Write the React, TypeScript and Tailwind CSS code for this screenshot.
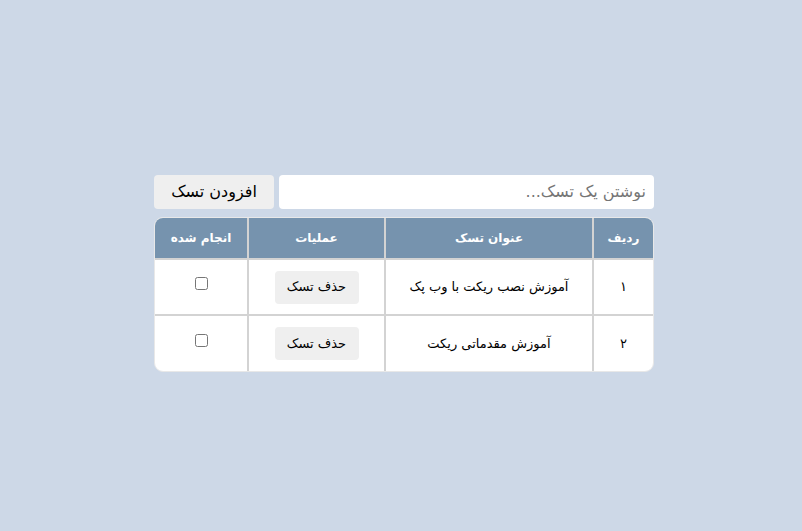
import React from "react";

const tasks = [
  { id: "۱", title: "آموزش نصب ریکت با وب پک" },
  { id: "۲", title: "آموزش مقدماتی ریکت" },
];

const App = () => {
  return (
    <div
      dir="rtl"
      className="min-h-screen w-full bg-[#cdd8e7] flex items-center justify-center pt-[16px] pl-[6px] font-['DejaVu_Sans',sans-serif]"
    >
      <div className="w-[500px] flex flex-col gap-2">
        <div className="flex gap-[5px] h-[34px]">
          <input
            type="text"
            placeholder="نوشتن یک تسک..."
            className="flex-1 bg-white rounded-[4px] px-[8px] text-[16px] text-[#333] placeholder:text-[#757575] outline-none"
          />
          <button className="w-[120px] bg-[#efefef] rounded-[4px] text-[16px] text-black">
            افزودن تسک
          </button>
        </div>

        <div className="rounded-[9px] overflow-hidden border border-[#e8e8e8] bg-white">
          <table className="w-full border-collapse text-[13px] text-black">
            <thead>
              <tr className="bg-[#7693ae] text-white h-[41px]">
                <th className="w-[60px] border-l-2 border-[#d3d3d3] text-[12px] font-bold">ردیف</th>
                <th className="w-[208px] border-l-2 border-[#d3d3d3] text-[12px] font-bold">عنوان تسک</th>
                <th className="w-[137px] border-l-2 border-[#d3d3d3] text-[12px] font-bold">عملیات</th>
                <th className="text-[12px] font-bold">انجام شده</th>
              </tr>
            </thead>
            <tbody>
              {tasks.map((t) => (
                <tr key={t.id} className="h-[56px] border-t-2 border-[#d3d3d3]">
                  <td className="border-l-2 border-[#d3d3d3] text-center">{t.id}</td>
                  <td className="border-l-2 border-[#d3d3d3] text-center">{t.title}</td>
                  <td className="border-l-2 border-[#d3d3d3] text-center">
                    <button className="w-[84px] h-[33px] bg-[#efefef] rounded-[4px] text-[13px]">
                      حذف تسک
                    </button>
                  </td>
                  <td className="text-center">
                    <input type="checkbox" className="w-[13px] h-[13px] -mt-[8px] align-middle" />
                  </td>
                </tr>
              ))}
            </tbody>
          </table>
        </div>
      </div>
    </div>
  );
};

export default App;
